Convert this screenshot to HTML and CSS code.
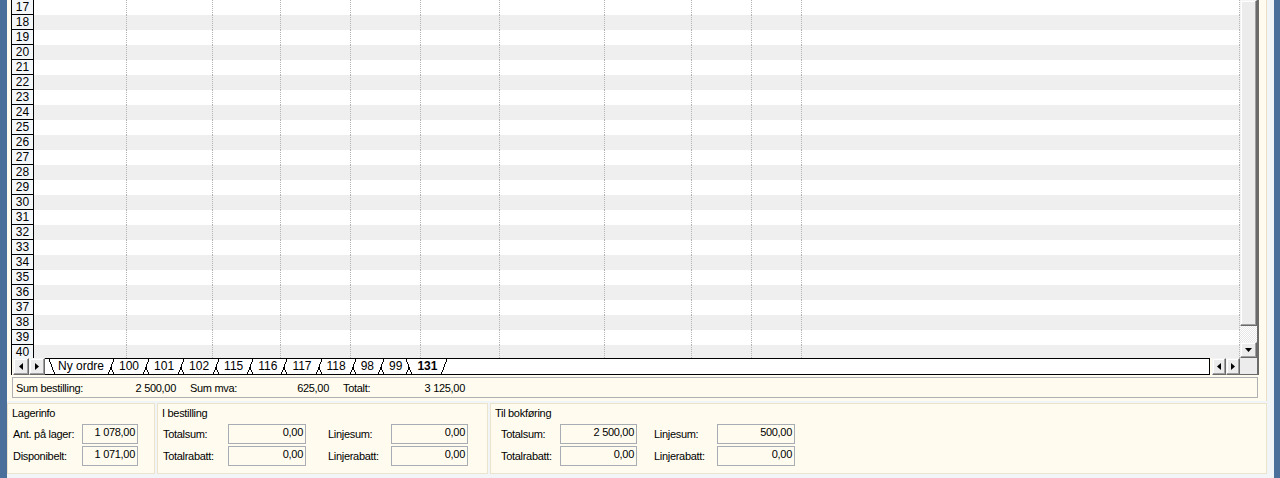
FILE: index.html
```html
<!DOCTYPE html>
<html lang="no">
<head>
<meta charset="utf-8">
<title>Ordre</title>
<link rel="stylesheet" href="styles.css">
</head>
<body>
<div class="window">
  <section class="top">
    <div class="gridbox">
      <div class="gridarea">
        <div class="rows">
          <div class="row"><div class="rh">17</div><i></i><i></i><i></i><i></i><i></i><i></i><i></i><i></i><i></i><i></i><i></i></div>
          <div class="row"><div class="rh">18</div><i></i><i></i><i></i><i></i><i></i><i></i><i></i><i></i><i></i><i></i><i></i></div>
          <div class="row"><div class="rh">19</div><i></i><i></i><i></i><i></i><i></i><i></i><i></i><i></i><i></i><i></i><i></i></div>
          <div class="row"><div class="rh">20</div><i></i><i></i><i></i><i></i><i></i><i></i><i></i><i></i><i></i><i></i><i></i></div>
          <div class="row"><div class="rh">21</div><i></i><i></i><i></i><i></i><i></i><i></i><i></i><i></i><i></i><i></i><i></i></div>
          <div class="row"><div class="rh">22</div><i></i><i></i><i></i><i></i><i></i><i></i><i></i><i></i><i></i><i></i><i></i></div>
          <div class="row"><div class="rh">23</div><i></i><i></i><i></i><i></i><i></i><i></i><i></i><i></i><i></i><i></i><i></i></div>
          <div class="row"><div class="rh">24</div><i></i><i></i><i></i><i></i><i></i><i></i><i></i><i></i><i></i><i></i><i></i></div>
          <div class="row"><div class="rh">25</div><i></i><i></i><i></i><i></i><i></i><i></i><i></i><i></i><i></i><i></i><i></i></div>
          <div class="row"><div class="rh">26</div><i></i><i></i><i></i><i></i><i></i><i></i><i></i><i></i><i></i><i></i><i></i></div>
          <div class="row"><div class="rh">27</div><i></i><i></i><i></i><i></i><i></i><i></i><i></i><i></i><i></i><i></i><i></i></div>
          <div class="row"><div class="rh">28</div><i></i><i></i><i></i><i></i><i></i><i></i><i></i><i></i><i></i><i></i><i></i></div>
          <div class="row"><div class="rh">29</div><i></i><i></i><i></i><i></i><i></i><i></i><i></i><i></i><i></i><i></i><i></i></div>
          <div class="row"><div class="rh">30</div><i></i><i></i><i></i><i></i><i></i><i></i><i></i><i></i><i></i><i></i><i></i></div>
          <div class="row"><div class="rh">31</div><i></i><i></i><i></i><i></i><i></i><i></i><i></i><i></i><i></i><i></i><i></i></div>
          <div class="row"><div class="rh">32</div><i></i><i></i><i></i><i></i><i></i><i></i><i></i><i></i><i></i><i></i><i></i></div>
          <div class="row"><div class="rh">33</div><i></i><i></i><i></i><i></i><i></i><i></i><i></i><i></i><i></i><i></i><i></i></div>
          <div class="row"><div class="rh">34</div><i></i><i></i><i></i><i></i><i></i><i></i><i></i><i></i><i></i><i></i><i></i></div>
          <div class="row"><div class="rh">35</div><i></i><i></i><i></i><i></i><i></i><i></i><i></i><i></i><i></i><i></i><i></i></div>
          <div class="row"><div class="rh">36</div><i></i><i></i><i></i><i></i><i></i><i></i><i></i><i></i><i></i><i></i><i></i></div>
          <div class="row"><div class="rh">37</div><i></i><i></i><i></i><i></i><i></i><i></i><i></i><i></i><i></i><i></i><i></i></div>
          <div class="row"><div class="rh">38</div><i></i><i></i><i></i><i></i><i></i><i></i><i></i><i></i><i></i><i></i><i></i></div>
          <div class="row"><div class="rh">39</div><i></i><i></i><i></i><i></i><i></i><i></i><i></i><i></i><i></i><i></i><i></i></div>
          <div class="row"><div class="rh">40</div><i></i><i></i><i></i><i></i><i></i><i></i><i></i><i></i><i></i><i></i><i></i></div>
        </div>
        <div class="vscroll">
          <div class="thumb"></div>
          <div class="track"></div>
          <div class="sbtn vbtn"><svg width="7" height="4" viewBox="0 0 7 4"><path d="M0 0h7L3.5 4z" fill="#000"/></svg></div>
        </div>
      </div>
      <div class="hbar">
        <div class="sbtn nav"><svg width="4" height="7" viewBox="0 0 4 7"><path d="M4 0v7L0 3.5z" fill="#000"/></svg></div>
        <div class="sbtn nav"><svg width="4" height="7" viewBox="0 0 4 7"><path d="M0 0v7l4-3.5z" fill="#000"/></svg></div>
        <div class="tabs">
          <svg class="sep first" width="13" height="16" viewBox="0 0 13 16"><path d="M4 0L10 16" stroke="#000" fill="none"/></svg>
          <span class="tab">Ny ordre</span>
          <svg class="sep" width="15" height="16" viewBox="0 0 15 16"><path d="M4 16L10 0M7 8L10 16" stroke="#000" fill="none"/></svg>
          <span class="tab">100</span>
          <svg class="sep" width="15" height="16" viewBox="0 0 15 16"><path d="M4 16L10 0M7 8L10 16" stroke="#000" fill="none"/></svg>
          <span class="tab">101</span>
          <svg class="sep" width="15" height="16" viewBox="0 0 15 16"><path d="M4 16L10 0M7 8L10 16" stroke="#000" fill="none"/></svg>
          <span class="tab">102</span>
          <svg class="sep" width="15" height="16" viewBox="0 0 15 16"><path d="M4 16L10 0M7 8L10 16" stroke="#000" fill="none"/></svg>
          <span class="tab">115</span>
          <svg class="sep" width="15" height="16" viewBox="0 0 15 16"><path d="M4 16L10 0M7 8L10 16" stroke="#000" fill="none"/></svg>
          <span class="tab">116</span>
          <svg class="sep" width="15" height="16" viewBox="0 0 15 16"><path d="M4 16L10 0M7 8L10 16" stroke="#000" fill="none"/></svg>
          <span class="tab">117</span>
          <svg class="sep" width="15" height="16" viewBox="0 0 15 16"><path d="M4 16L10 0M7 8L10 16" stroke="#000" fill="none"/></svg>
          <span class="tab">118</span>
          <svg class="sep" width="15" height="16" viewBox="0 0 15 16"><path d="M4 16L10 0M7 8L10 16" stroke="#000" fill="none"/></svg>
          <span class="tab">98</span>
          <svg class="sep" width="15" height="16" viewBox="0 0 15 16"><path d="M4 16L10 0M7 8L10 16" stroke="#000" fill="none"/></svg>
          <span class="tab">99</span>
          <svg class="sep" width="15" height="16" viewBox="0 0 15 16"><path d="M4 0L10 16M4 16L7 8" stroke="#000" fill="none"/></svg>
          <span class="tab active">131</span>
          <svg class="sep" width="15" height="16" viewBox="0 0 15 16"><path d="M4 16L10 0" stroke="#000" fill="none"/></svg>
        </div>
        <div class="sbtn hbtn"><svg width="4" height="7" viewBox="0 0 4 7"><path d="M4 0v7L0 3.5z" fill="#000"/></svg></div>
        <div class="sbtn hbtn"><svg width="4" height="7" viewBox="0 0 4 7"><path d="M0 0v7l4-3.5z" fill="#000"/></svg></div>
        <div class="corner"></div>
      </div>
    </div>
    <div class="status">
      <span class="st st1"><span>Sum bestilling:</span><span>2 500,00</span></span>
      <span class="st st2"><span>Sum mva:</span><span>625,00</span></span>
      <span class="st st3"><span>Totalt:</span><span>3 125,00</span></span>
    </div>
  </section>
  <section class="groups">
    <div class="group g-lager">
      <div class="gtitle">Lagerinfo</div>
      <div class="gfields">
        <span class="lbl">Ant. på lager:</span><span class="val">1 078,00</span>
        <span class="lbl">Disponibelt:</span><span class="val">1 071,00</span>
      </div>
    </div>
    <div class="group g-best">
      <div class="gtitle">I bestilling</div>
      <div class="gfields">
        <span class="lbl">Totalsum:</span><span class="val">0,00</span><span class="lbl">Linjesum:</span><span class="val">0,00</span>
        <span class="lbl">Totalrabatt:</span><span class="val">0,00</span><span class="lbl">Linjerabatt:</span><span class="val">0,00</span>
      </div>
    </div>
    <div class="group g-bok">
      <div class="gtitle">Til bokføring</div>
      <div class="gfields">
        <span class="lbl">Totalsum:</span><span class="val">2 500,00</span><span class="lbl">Linjesum:</span><span class="val">500,00</span>
        <span class="lbl">Totalrabatt:</span><span class="val">0,00</span><span class="lbl">Linjerabatt:</span><span class="val">0,00</span>
      </div>
    </div>
  </section>
</div>
</body>
</html>
```

FILE: styles.css
```css
* { box-sizing: border-box; }
html, body { margin: 0; padding: 0; }
body {
  width: 1280px;
  height: 478px;
  overflow: hidden;
  background: #f2f5f8;
  font-family: "Liberation Sans", Arial, sans-serif;
  color: #000;
}
.window {
  height: 478px;
  border-left: 7px solid #4b6f9b;
  border-right: 6px solid #4b6f9b;
  background: #f2f5f8;
  display: flex;
  flex-direction: column;
}
.top {
  width: 1260px;
  background: #fffcef;
  border-right: 1px solid #e9e0c6;
  padding: 0 7px 3px 4px;
}
.gridbox {
  border-left: 1px solid #000;
  border-right: 2px solid #6b6b6b;
  display: flex;
  flex-direction: column;
}
.gridarea {
  height: 358px;
  display: flex;
  overflow: hidden;
}
.rows {
  width: 1228px;
  display: flex;
  flex-direction: column;
}
.row {
  height: 15px;
  flex: none;
  display: grid;
  grid-template-columns: 22px 93px 86px 68px 70px 70px 79px 105px 87px 60px 50px 438px;
  background: #fff;
}
.row:nth-child(even) { background: #efefef; }
.row i { border-right: 1px dotted #b4b4b4; }
.rh {
  background: #f4f7fa;
  border-right: 1px solid #000;
  border-bottom: 1px solid #000;
  font-size: 12px;
  line-height: 14px;
  text-align: center;
  color: #000;
}
.vscroll {
  width: 17px;
  display: flex;
  flex-direction: column;
}
.sbtn {
  background: #ececec;
  border: 1px solid;
  border-color: #f4f4f4 #696969 #696969 #f4f4f4;
  box-shadow: inset -1px -1px #a0a0a0, inset 1px 1px #fff;
  display: flex;
  align-items: center;
  justify-content: center;
  flex: none;
}
.thumb {
  height: 326px;
  background: #ececec;
  border: 1px solid;
  border-color: #f4f4f4 #696969 #696969 #f4f4f4;
  box-shadow: inset -1px -1px #a0a0a0, inset 1px 1px #fff;
}
.track {
  flex: 1;
  background-color: #fff;
  background-image: repeating-conic-gradient(#e6e6e6 0 25%, #fff 0 50%);
  background-size: 2px 2px;
}
.vbtn { height: 16px; }
.hbar {
  height: 17px;
  display: flex;
  padding-left: 1px;
}
.nav { width: 16px; height: 17px; }
.tabs {
  width: 1165px;
  height: 17px;
  background: #fff;
  border-top: 1px solid #000;
  border-bottom: 1px solid #000;
  border-right: 1px solid #000;
  margin-right: 2px;
  display: flex;
  align-items: flex-start;
  font-size: 12px;
  line-height: 15px;
}
.sep { flex: none; display: block; shape-rendering: crispEdges; }
.tab { white-space: nowrap; flex: none; }
.tab.active { font-weight: bold; }
.hbtn { width: 14px; height: 17px; }
.corner { width: 17px; height: 17px; background: #ececec; border-bottom: 1px solid #696969; }
.status {
  margin: 2px 0 0 1px;
  width: 1246px;
  height: 21px;
  border: 1px solid #aeb0b2;
  padding: 0 0 0 3px;
  display: flex;
  align-items: center;
  gap: 14px;
  font-size: 11px;
  letter-spacing: -0.3px;
}
.st { display: flex; justify-content: space-between; }
.st1 { width: 160px; }
.st2 { width: 139px; }
.st3 { width: 122px; }
.groups {
  margin-top: 2px;
  display: flex;
  gap: 2px;
  width: 1260px;
}
.group {
  height: 71px;
  background: #fffcef;
  border: 1px solid #ebe3cb;
  padding: 1px 0 0 4px;
  font-size: 11px;
  letter-spacing: -0.3px;
}
.g-lager { width: 148px; }
.g-best { width: 331px; }
.g-bok { width: 777px; }
.gtitle { height: 13px; line-height: 13px; margin-top: 2px; }
.gfields {
  margin-top: 4px;
  display: grid;
  row-gap: 2px;
  grid-auto-rows: 20px;
}
.lbl { align-self: center; line-height: 13px; white-space: nowrap; }
.val {
  border: 1px solid #a7adb3;
  text-align: right;
  padding: 1px 2px 0 0;
  line-height: 12px;
}
.g-lager .gfields { padding-left: 1px; grid-template-columns: 69px 56px; }
.g-best .gfields { padding-left: 1px; grid-template-columns: 65px 78px 85px 77px; }
.g-best .lbl:nth-child(4n+3) { padding-left: 22px; }
.g-bok .gfields { padding-left: 6px; grid-template-columns: 59px 77px 80px 78px; }
.g-bok .lbl:nth-child(4n+3) { padding-left: 17px; }
```
